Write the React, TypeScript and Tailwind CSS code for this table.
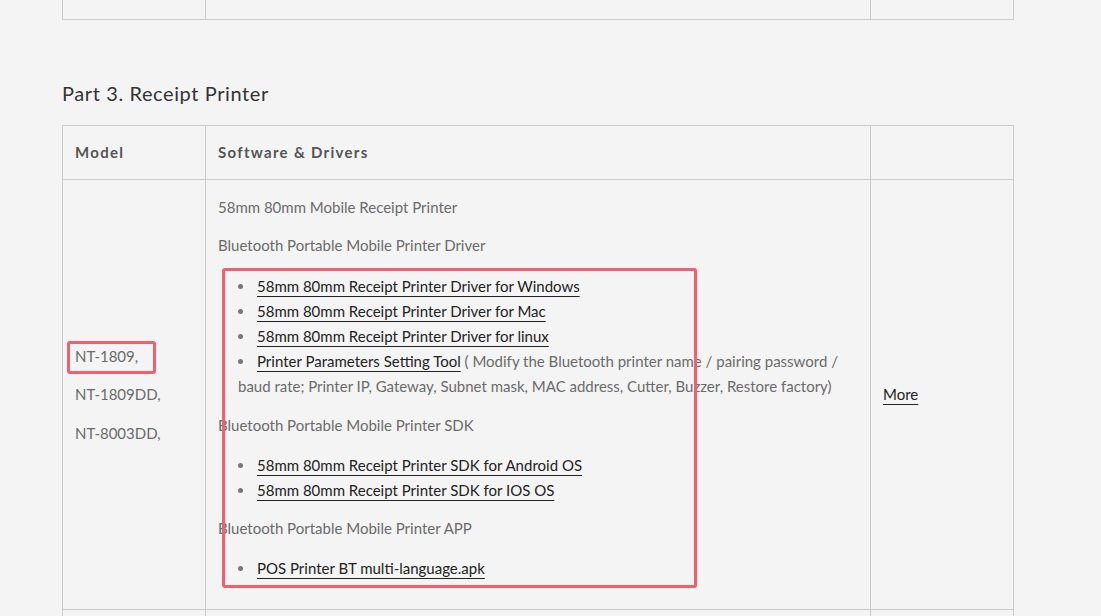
import React from "react";

const font = { fontFamily: "Lato, 'Liberation Sans', sans-serif" };

function Link({ children, li }: { children: React.ReactNode; li?: boolean }) {
  return (
    <a
      className={
        li
          ? "ml-[-2px] text-[#222] underline underline-offset-[4px] decoration-[1px] decoration-[#222]"
          : "text-[#222] underline underline-offset-[4px] decoration-[1px] decoration-[#222]"
      }
      href="#"
    >
      {children}
    </a>
  );
}

export default function App() {
  return (
    <div
      className="relative h-[616px] w-[1101px] overflow-hidden bg-[#f4f4f4] text-[15px] tracking-[0px] text-[#6b6b6b]"
      style={font}
    >
      <div className="ml-[62px] w-[951px]">
        {/* tail of previous table */}
        <table className="w-full table-fixed border-collapse">
          <colgroup>
            <col className="w-[143px]" />
            <col className="w-[665px]" />
            <col className="w-[143px]" />
          </colgroup>
          <tbody>
            <tr className="h-[19px]">
              <td className="border border-t-0 border-[#cbcbcb]"></td>
              <td className="border border-t-0 border-[#cbcbcb]"></td>
              <td className="border border-t-0 border-[#cbcbcb]"></td>
            </tr>
          </tbody>
        </table>

        <h2 className="mt-[61px] mb-[20px] text-[20px] leading-[24px] tracking-[0.6px] text-[#333]">
          Part 3. Receipt Printer
        </h2>

        <table className="w-full table-fixed border-collapse">
          <colgroup>
            <col className="w-[143px]" />
            <col className="w-[665px]" />
            <col className="w-[143px]" />
          </colgroup>
          <thead>
            <tr className="h-[54px]">
              <th className="border border-[#cbcbcb] px-[12px] text-left font-bold tracking-[1.3px] text-[#555]">Model</th>
              <th className="border border-[#cbcbcb] px-[12px] text-left font-bold tracking-[1.3px] text-[#555]">
                Software &amp; Drivers
              </th>
              <th className="border border-[#cbcbcb]"></th>
            </tr>
          </thead>
          <tbody>
            <tr className="h-[429px]">
              <td className="border border-[#cbcbcb] px-[12px] align-middle leading-[25px]">
                <div className="flex flex-col gap-[13.5px] pt-[1px]">
                  <p>NT-1809,</p>
                  <p>NT-1809DD,</p>
                  <p>NT-8003DD,</p>
                </div>
              </td>
              <td className="border border-[#cbcbcb] px-[12px] pt-[15px] pb-[14px] align-top leading-[25px]">
                <p className="mb-[13px]">58mm 80mm Mobile Receipt Printer</p>
                <p>Bluetooth Portable Mobile Printer Driver</p>
                <ul className="mt-[16px] mb-[14px] list-inside list-disc pl-[20px] marker:text-[#777]">
                  <li><Link li>58mm 80mm Receipt Printer Driver for Windows</Link></li>
                  <li><Link li>58mm 80mm Receipt Printer Driver for Mac</Link></li>
                  <li><Link li>58mm 80mm Receipt Printer Driver for linux</Link></li>
                  <li>
                    <Link li>Printer Parameters Setting Tool</Link> ( Modify the Bluetooth printer name / pairing password /
                    baud rate; Printer IP, Gateway, Subnet mask, MAC address, Cutter, Buzzer, Restore factory)
                  </li>
                </ul>
                <p>Bluetooth Portable Mobile Printer SDK</p>
                <ul className="mt-[15px] mb-[13px] list-inside list-disc pl-[20px] marker:text-[#777]">
                  <li><Link li>58mm 80mm Receipt Printer SDK for Android OS</Link></li>
                  <li><Link li>58mm 80mm Receipt Printer SDK for IOS OS</Link></li>
                </ul>
                <p>Bluetooth Portable Mobile Printer APP</p>
                <ul className="mt-[15px] mb-[14px] list-inside list-disc pl-[20px] marker:text-[#777]">
                  <li><Link li>POS Printer BT multi-language.apk</Link></li>
                </ul>
              </td>
              <td className="border border-[#cbcbcb] px-[12px] align-middle leading-[25px]">
                <Link>More</Link>
              </td>
            </tr>
            <tr className="h-[60px]">
              <td className="border border-[#cbcbcb]"></td>
              <td className="border border-[#cbcbcb]"></td>
              <td className="border border-[#cbcbcb]"></td>
            </tr>
          </tbody>
        </table>
      </div>

      {/* annotation overlays */}
      <div className="pointer-events-none absolute left-[222px] top-[268px] h-[320px] w-[475px] rounded-[3px] border-[3px] border-[#f0606e]"></div>
      <div className="pointer-events-none absolute left-[67px] top-[341px] h-[33px] w-[89px] rounded-[3px] border-[3px] border-[#f0606e]"></div>
    </div>
  );
}
